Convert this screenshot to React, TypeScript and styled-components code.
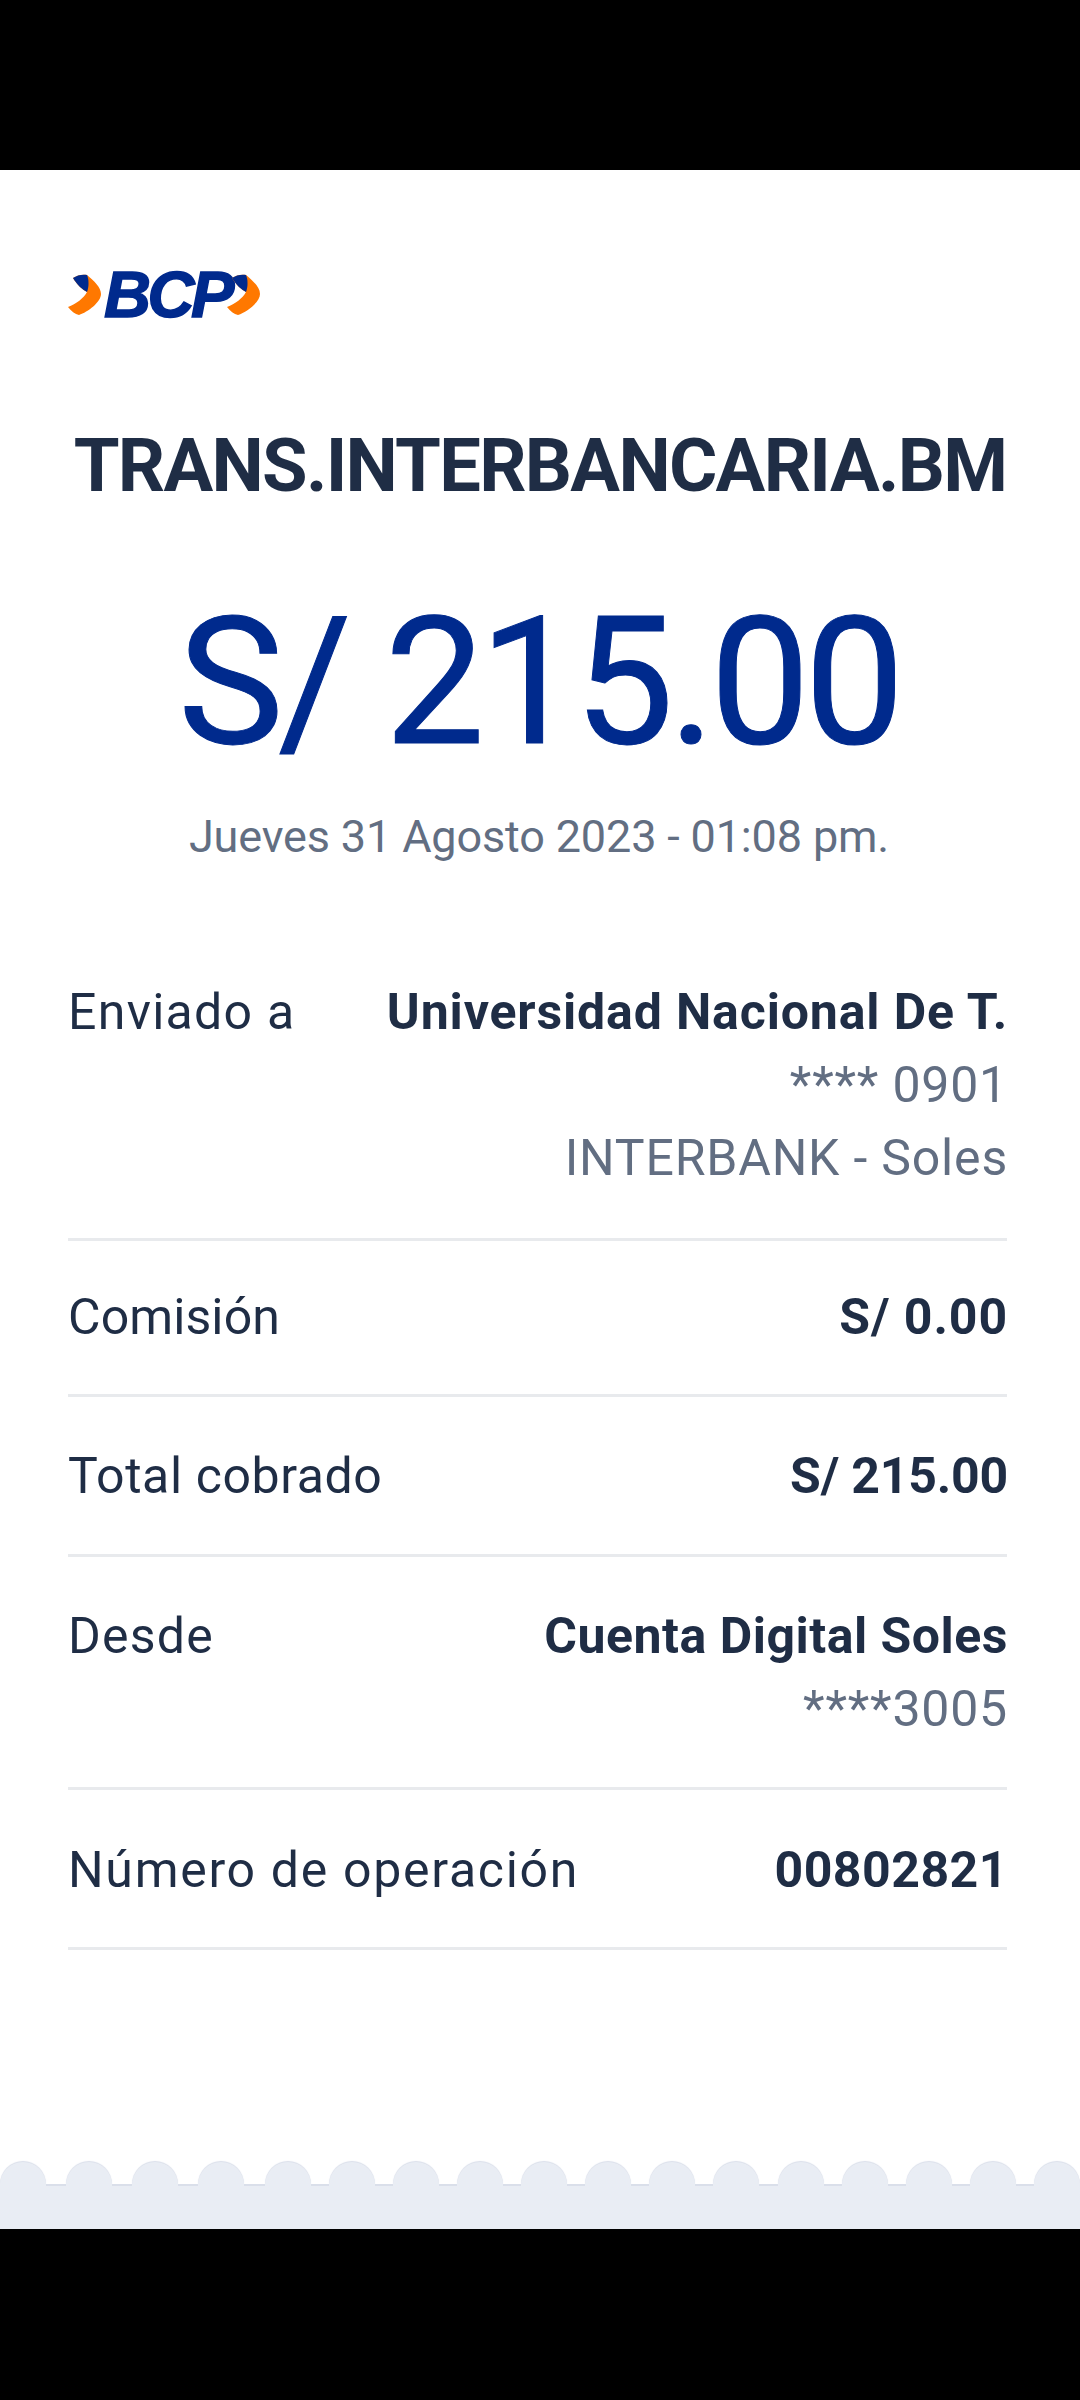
import React from "react";
import styled, { createGlobalStyle } from "styled-components";

const GlobalStyle = createGlobalStyle`
  html, body {
    margin: 0;
    padding: 0;
    background: #000;
  }
  * { box-sizing: border-box; }
`;

const Screen = styled.div`
  width: 1080px;
  height: 2400px;
  background: #000;
  padding-top: 170px;
  font-family: Roboto, "Noto Sans", sans-serif;
`;

const Receipt = styled.div`
  height: 2059px;
  background: #fff;
  display: flex;
  flex-direction: column;
  padding-top: 102px;
`;

const Body = styled.div`
  flex: 1;
  padding: 0 73px 0 68px;
`;

const Logo = styled.div`
  display: flex;
  align-items: center;
  height: 45px;
`;

const LogoText = styled.span`
  font-family: "Liberation Sans", sans-serif;
  font-weight: 700;
  font-style: italic;
  font-size: 65px;
  letter-spacing: -3.5px;
  color: #002a8d;
  -webkit-text-stroke: 1.5px #002a8d;
  line-height: 45px;
  margin: 0 -4px 0 0;
`;

const Title = styled.h1`
  margin: 107px 0 0;
  padding-left: 5px;
  font-size: 74px;
  line-height: 84px;
  font-weight: 700;
  color: #1f2d45;
  text-align: center;
  white-space: nowrap;
  letter-spacing: -1.7px;
`;

const Amount = styled.div`
  margin-top: 74px;
  padding-left: 2px;
  font-size: 178px;
  line-height: 200px;
  font-weight: 400;
  color: #002a8d;
  -webkit-text-stroke: 1px #002a8d;
  text-align: center;
  letter-spacing: -5.5px;
`;

const DateLine = styled.div`
  margin-top: 25px;
  padding-left: 3px;
  font-size: 45px;
  line-height: 60px;
  color: #626e82;
  text-align: center;
  letter-spacing: -0.15px;
`;

const Rows = styled.div`
  margin-top: 68px;
`;

const Row = styled.div<{ $top: number; $bottom: number }>`
  display: flex;
  justify-content: space-between;
  padding: ${(p) => p.$top}px 0 ${(p) => p.$bottom}px;
  border-bottom: 3px solid #e8eaed;
`;

const Label = styled.div<{ $track?: number }>`
  font-size: 50px;
  line-height: 73px;
  color: #1f2d45;
  letter-spacing: ${(p) => p.$track ?? 0.6}px;
`;

const Values = styled.div`
  text-align: right;
  margin-right: -1px;
`;

const Strong = styled.div<{ $track?: number }>`
  font-size: 50px;
  line-height: 73px;
  font-weight: 700;
  color: #1f2d45;
  letter-spacing: ${(p) => p.$track ?? 0.5}px;
`;

const Muted = styled.div`
  font-size: 50px;
  line-height: 73px;
  color: #626e82;
  letter-spacing: 0.8px;
`;

const Footer = styled.div`
  height: 67px;
  position: relative;
  display: flex;
  justify-content: space-between;
`;

const Scallop = styled.div<{ $wide: boolean }>`
  width: 46px;
  height: 23px;
  margin-right: ${(p) => (p.$wide ? 2 : 0)}px;
  border-radius: 23px 23px 0 0;
  background: #e9edf4;
  box-shadow: 0 -1px 1px #dadfea;
`;

const Strip = styled.div`
  position: absolute;
  left: 0;
  right: 0;
  top: 22px;
  bottom: 0;
  background: #e9edf4;
  background-image: linear-gradient(#dadfea, #dadfea);
  background-size: 100% 2px;
  background-repeat: no-repeat;
`;

const ScallopFill = styled.div<{ $wide: boolean }>`
  width: 46px;
  height: 4px;
  margin-right: ${(p) => (p.$wide ? 2 : 0)}px;
  background: #e9edf4;
`;

const ScallopFills = styled.div`
  position: absolute;
  left: 0;
  right: 0;
  top: 21px;
  display: flex;
  justify-content: space-between;
`;

const Chevron = () => (
  <svg width="36" height="42" viewBox="0 0 36 42">
    <path d="M5 4 C9 1 15 0 19 1 C26 7 33 13 33 20 C33 28 20 38 11 41 C7 40 3 37 0 33 C8 30 16 24 19 18 C15 16 9 11 5 4 Z" fill="#ff7800" />
    <path d="M5 4 C9 1 15 0 19 1 C21 5 21 13 19 18 C15 16 9 11 5 4 Z" fill="#002a8d" />
  </svg>
);

const SCALLOPS = Array.from({ length: 17 }, (_, i) => i);

export default function App() {
  return (
    <Screen>
      <GlobalStyle />
      <Receipt>
        <Body>
          <Logo>
            <Chevron />
            <LogoText>BCP</LogoText>
            <Chevron />
          </Logo>
          <Title>TRANS.INTERBANCARIA.BM</Title>
          <Amount>S/ 215.00</Amount>
          <DateLine>Jueves 31 Agosto 2023 - 01:08 pm.</DateLine>
          <Rows>
            <Row $top={41} $bottom={43}>
              <Label $track={1.3}>Enviado a</Label>
              <Values>
                <Strong $track={0.85}>Universidad Nacional De T.</Strong>
                <Muted>**** 0901</Muted>
                <Muted>INTERBANK - Soles</Muted>
              </Values>
            </Row>
            <Row $top={40} $bottom={40}>
              <Label $track={0.1}>Comisión</Label>
              <Values><Strong $track={0.9}>S/ 0.00</Strong></Values>
            </Row>
            <Row $top={43} $bottom={41}>
              <Label>Total cobrado</Label>
              <Values><Strong $track={-0.2}>S/ 215.00</Strong></Values>
            </Row>
            <Row $top={43} $bottom={41}>
              <Label $track={1.2}>Desde</Label>
              <Values>
                <Strong>Cuenta Digital Soles</Strong>
                <Muted>****3005</Muted>
              </Values>
            </Row>
            <Row $top={44} $bottom={40}>
              <Label $track={1.7}>Número de operación</Label>
              <Values><Strong>00802821</Strong></Values>
            </Row>
          </Rows>
        </Body>
        <Footer>
          {SCALLOPS.map((i) => <Scallop key={i} $wide={i < 4} />)}
          <Strip />
          <ScallopFills>
            {SCALLOPS.map((i) => <ScallopFill key={i} $wide={i < 4} />)}
          </ScallopFills>
        </Footer>
      </Receipt>
    </Screen>
  );
}
